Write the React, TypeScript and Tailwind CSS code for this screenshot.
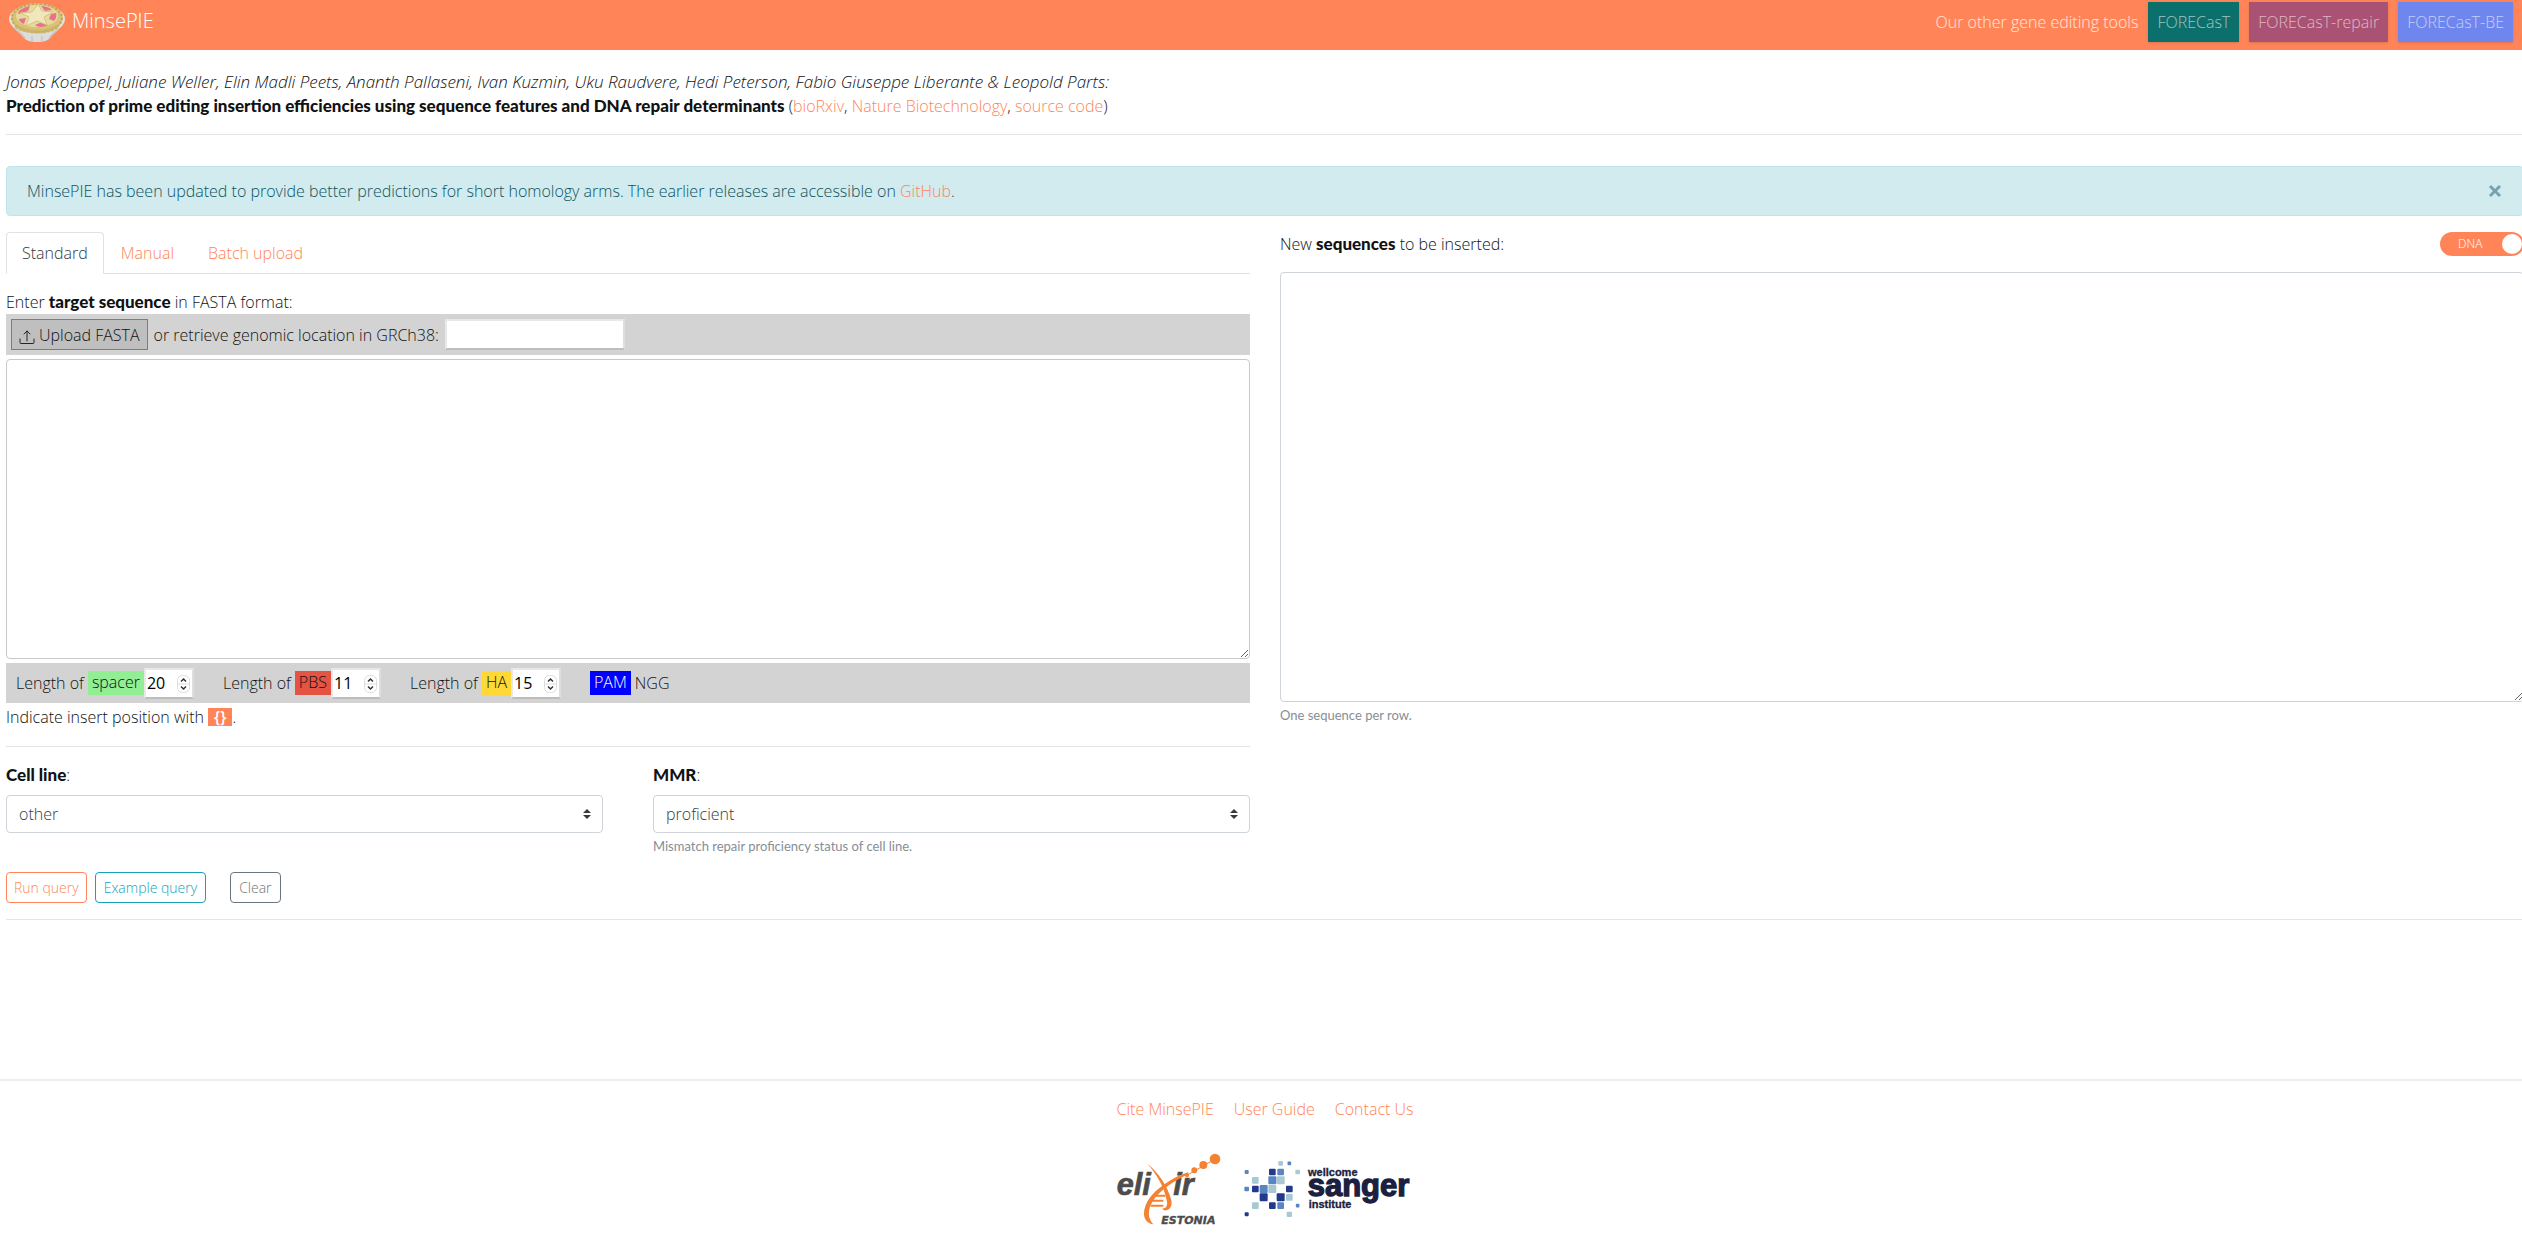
import React from 'react';

const LINK = 'text-[#ff8559] hover:underline';

function PieLogo() {
  return (
    <svg viewBox="0 0 60 42" className="h-[42px] w-[60px]" aria-hidden="true">
      <path d="M2 18C2 29 12 32 15 37c3 4 8 5 14 5s11-1 14-5c3-5 13-8 13-19z" fill="#dcdcdc" />
      <path d="M5 27c5 5 9 6 12 11M53 27c-5 5-9 6-12 11M24 36v5M34 36v5" stroke="#bdbdc0" strokeWidth="1" fill="none" />
      <ellipse cx="29" cy="19" rx="28" ry="15" fill="#e4e2dc" />
      <ellipse cx="29" cy="18" rx="26" ry="15" fill="#d8c274" />
      <ellipse cx="29" cy="18" rx="25" ry="14" fill="none" stroke="#bfa65b" strokeWidth="2" strokeDasharray="2 2" />
      <ellipse cx="29" cy="16" rx="21" ry="11" fill="#e7da9f" />
      <path d="M10 13c2-4 7-6 12-7l-2 5-9 3zM33 6c4 0 8 1 11 4l-7 1zM43 14l5-1c1 3 0 6-2 8l-5-2zM11 19l7-1-2 6c-3-1-5-3-5-5zM27 25l7-3 6 3c-3 2-10 3-13 0z" fill="#e8718c" />
      <path d="M30 4l4 7 11 1-9 5 3 8-10-4-11 5 3-9-9-4 12-1z" fill="#f1e7bd" stroke="#d6c57f" strokeWidth="1" />
      <path d="M8 26c8 7 34 8 42 0" fill="none" stroke="#cdb568" strokeWidth="4" strokeDasharray="3 1" />
    </svg>
  );
}

function ElixirLogo() {
  return (
    <svg viewBox="18 24 318 228" className="h-[76px] w-[106px]" role="img" aria-label="elixir Estonia">
      <g fill="#4d4b4c" stroke="#4d4b4c" fontFamily="Liberation Sans, sans-serif" fontWeight="700" fontStyle="italic">
        <text x="20" y="150" fontSize="92" strokeWidth="2">eli</text>
        <text x="190" y="150" fontSize="92" strokeWidth="2">ir</text>
        <text x="154" y="236" fontSize="33" strokeWidth="1" fontFamily="DejaVu Sans, sans-serif">ESTONIA</text>
      </g>
      <g fill="#f58233">
        <path d="M112 56C148 84 172 124 183 162c5 16 0 32-14 34-8 1-11-2-11-6 8 1 15-6 13-20C165 132 144 92 112 56z" />
        <path d="M236 88C196 104 150 136 130 166c-18 28-18 54 0 72-16-2-28-14-28-32 0-32 26-64 58-86 26-18 48-30 74-38z" />
        <circle cx="315" cy="42" r="16" />
        <circle cx="280" cy="60" r="12" />
        <circle cx="253" cy="76" r="9" />
        <circle cx="231" cy="91" r="6" />
      </g>
      <path d="M231 91L315 42" stroke="#f58233" strokeWidth="3" />
      <path d="M138 152h28M126 167h34M122 182h38" stroke="#f58233" strokeWidth="6" />
    </svg>
  );
}

const SQUARES: [number, number, number, string][] = [
  [134, 40, 14, '#a8c9d3'], [185, 66, 14, '#a8c9d3'], [58, 91, 20, '#a8c9d3'], [134, 91, 24, '#a8c9d3'],
  [109, 117, 24, '#a8c9d3'], [160, 142, 20, '#a8c9d3'], [58, 167, 20, '#a8c9d3'], [160, 193, 16, '#a8c9d3'],
  [160, 40, 11, '#5b85c0'], [32, 66, 12, '#5b85c0'], [134, 66, 20, '#5b85c0'], [109, 91, 24, '#5b85c0'],
  [32, 117, 14, '#5b85c0'], [83, 117, 24, '#5b85c0'], [134, 167, 20, '#5b85c0'], [185, 167, 11, '#5b85c0'],
  [109, 66, 20, '#22398c'], [58, 117, 20, '#22398c'], [160, 117, 20, '#22398c'], [83, 142, 24, '#22398c'],
  [134, 142, 24, '#22398c'], [109, 167, 20, '#22398c'], [32, 193, 12, '#22398c'],
];

function SangerLogo() {
  return (
    <svg viewBox="24 30 501 174" className="h-[58px] w-[167px]" role="img" aria-label="Wellcome Sanger Institute">
      {SQUARES.map(([x, y, s, c]) => (
        <rect key={`${x}-${y}`} x={x - s / 2} y={y - s / 2} width={s} height={s} rx="3" fill={c} />
      ))}
      <g fill="#1c1f40" stroke="#1c1f40" fontFamily="Liberation Sans, sans-serif" fontWeight="700">
        <text x="216" y="77" fontSize="33" strokeWidth="1">wellcome</text>
        <text x="215" y="138" fontSize="93" strokeWidth="4">sanger</text>
        <text x="218" y="175" fontSize="33" strokeWidth="1">institute</text>
      </g>
    </svg>
  );
}

function UploadIcon() {
  return (
    <svg viewBox="0 0 16 16" className="mt-1 size-4" fill="none" stroke="#212529" strokeWidth="1" strokeLinecap="round" strokeLinejoin="round" aria-hidden="true">
      <path d="M1 10v3.500a1 1 0 0 0 1 1h12a1 1 0 0 0 1-1V10M8 12V2M5 5l3-3 3 3" />
    </svg>
  );
}

function LengthField({ name, color, value }: { name: string; color: string; value: number }) {
  return (
    <div className="flex items-center">
      <label htmlFor={name} className="flex gap-1">
        Length of <span className={`px-1 leading-[22px] ${color}`}>{name}</span>
      </label>
      <div className="relative h-[31px] w-[50px]">
        <input
          id={name}
          type="number"
          defaultValue={value}
          className="block size-full appearance-none border-2 border-t-[#e8e8e8] border-r-[#dedede] border-b-[#bdbdbd] border-l-[#e8e8e8] bg-white pl-px font-normal text-black [-moz-appearance:textfield] [&::-webkit-inner-spin-button]:appearance-none"
        />
        <svg viewBox="0 0 13 18" className="pointer-events-none absolute top-[7px] right-1 h-[18px] w-[13px]" aria-hidden="true">
          <rect x="0.5" y="0.500" width="12" height="17" rx="5" fill="#fff" stroke="#dcdcdc" />
          <path d="M0 9h13" stroke="#dcdcdc" />
          <path d="M4 6.500l2.500-2.500L9 6.500M4 11.500L6.500 14 9 11.500" fill="none" stroke="#333" strokeWidth="1.500" />
        </svg>
      </div>
    </div>
  );
}

function SelectField({ id, label, options, hint }: { id: string; label: string; options: string[]; hint?: string }) {
  return (
    <div>
      <label htmlFor={id} className="mb-2 block">
        <b className="font-[Lato] text-[17px] leading-6 font-black">{label}</b>:
      </label>
      <div className="relative">
        <select id={id} className="block h-[38px] w-full appearance-none rounded border border-[#ced4da] bg-white px-3 text-[#343a40]">
          {options.map((o) => (
            <option key={o}>{o}</option>
          ))}
        </select>
        <svg viewBox="0 0 8 10" className="pointer-events-none absolute top-[14px] right-3 h-[10px] w-2" fill="#343a40" aria-hidden="true">
          <path d="M4 0L0 4h8zM4 10L0 6h8z" />
        </svg>
      </div>
      <small className="mt-1 block h-5 font-[Lato] text-[13px] leading-[19px] font-normal text-[#868e96]">{hint}</small>
    </div>
  );
}

const TOOLS = [
  ['FORECasT', 'bg-[#0b706c]'],
  ['FORECasT-repair', 'bg-[#a95273]'],
  ['FORECasT-BE', 'bg-[#6f86ee]'],
];

export default function App() {
  return (
    <div className="flex min-h-screen flex-col overflow-hidden bg-white font-['Open_Sans',sans-serif] text-base leading-6 font-light text-[#101214]">
      <header className="flex h-[50px] items-start justify-between bg-[#ff8559] pr-[9px] pl-2">
        <a href="#home" className="flex gap-1 text-xl leading-[42px] text-white">
          <PieLogo />
          MinsePIE
        </a>
        <nav className="flex items-center gap-[10px] pt-[2px]">
          <span className="text-white/80">Our other gene editing tools</span>
          {TOOLS.map(([name, bg]) => (
            <a key={name} href={`#${name}`} className={`px-[9px] py-2 text-white/60 shadow ${bg}`}>
              {name}
            </a>
          ))}
        </nav>
      </header>

      <main className="-mr-[2px] pl-[6px]">
        <div className="border-b border-black/10 pt-5 pb-4">
          <p className="text-[17px] leading-6 italic">
            Jonas Koeppel, Juliane Weller, Elin Madli Peets, Ananth Pallaseni, Ivan Kuzmin, Uku Raudvere, Hedi Peterson,
            Fabio Giuseppe Liberante &amp; Leopold Parts:
          </p>
          <p>
            <b className="font-[Lato] text-[17px] leading-6 font-black">
              Prediction of prime editing insertion efficiencies using sequence features and DNA repair determinants
            </b>{' '}
            (<a href="#biorxiv" className={LINK}>bioRxiv</a>, <a href="#nature" className={LINK}>Nature Biotechnology</a>,{' '}
            <a href="#source" className={LINK}>source code</a>)
          </p>
        </div>

        <div className="mt-[31px] flex items-center justify-between rounded border border-[#bee5eb] bg-[#d1ebef] py-3 pr-[21px] pl-5 text-[#0c5460]">
          <p>
            MinsePIE has been updated to provide better predictions for short homology arms. The earlier releases are
            accessible on <a href="#github" className={LINK}>GitHub</a>.
          </p>
          <button type="button" aria-label="Close" className="text-[#75a3ae]">
            <svg viewBox="0 0 14 14" className="size-[14px]" stroke="currentColor" strokeWidth="3" aria-hidden="true">
              <path d="M2 2l10 10M12 2L2 12" />
            </svg>
          </button>
        </div>

        <div className="mt-4 grid grid-cols-2 gap-[30px]">
          <section>
            <div role="tablist" className="flex h-[42px] border-b border-[#dee2e6]">
              <button type="button" role="tab" aria-selected="true" className="-mb-px rounded-t border border-[#dee2e6] border-b-white bg-white px-[15px] text-[#343a40]">
                Standard
              </button>
              <button type="button" role="tab" aria-selected="false" className="px-[17px] text-[#ff8559]">
                Manual
              </button>
              <button type="button" role="tab" aria-selected="false" className="px-[17px] text-[#ff8559]">
                Batch upload
              </button>
            </div>

            <label htmlFor="fasta" className="mt-4 block">
              Enter <b className="font-[Lato] text-[17px] leading-6 font-black">target sequence</b> in FASTA format:
            </label>
            <div className="flex h-[41px] items-center gap-[6px] bg-[#d3d3d3] pl-[5px]">
              <button type="button" className="flex h-[31px] items-center gap-1 border border-[#7d7d7d] bg-[#bfbfbf] px-[7px]">
                <UploadIcon />
                Upload FASTA
              </button>
              <label htmlFor="location">or retrieve genomic location in GRCh38:</label>
              <input
                id="location"
                type="text"
                className="h-[31px] w-[180px] border-2 border-t-[#e8e8e8] border-r-[#dedede] border-b-[#bdbdbd] border-l-[#e8e8e8] bg-white px-px"
              />
            </div>
            <textarea id="fasta" className="mt-1 block h-[300px] w-full rounded border border-[#c8c8c8] bg-white" />
            <div className="mt-1 flex h-10 items-center gap-[29px] bg-[#d3d3d3] pl-[10px]">
              <LengthField name="spacer" color="bg-[#92ee92]" value={20} />
              <LengthField name="PBS" color="bg-[#e55343]" value={11} />
              <LengthField name="HA" color="bg-[#ffd835]" value={15} />
              <div className="flex gap-1">
                <span className="bg-[#0000ff] px-1 leading-[22px] text-white">PAM</span> NGG
              </div>
            </div>
            <p className="mt-[2px]">
              Indicate insert position with <span className="inline-block bg-[#ff8559] px-[6px] text-base leading-[18px] font-semibold text-white">{'{}'}</span>.
            </p>
            <hr className="mt-[17px] mb-4 border-black/10" />
            <div className="grid grid-cols-2 gap-[50px]">
              <SelectField id="cell" label="Cell line" options={['other', 'HEK293T', 'HAP1']} />
              <SelectField id="mmr" label="MMR" options={['proficient', 'deficient']} hint="Mismatch repair proficiency status of cell line." />
            </div>
            <div className="mt-[15px] flex text-sm leading-[21px]">
              <button type="button" className="h-[31px] rounded border border-[#ff8559] px-[7px] text-[#ff8559]">
                Run query
              </button>
              <button type="button" className="ml-2 h-[31px] rounded border border-[#17a2b8] px-2 text-[#17a2b8]">
                Example query
              </button>
              <button type="button" className="ml-6 h-[31px] rounded border border-[#6c757d] px-2 text-[#6c757d]">
                Clear
              </button>
            </div>
          </section>

          <section>
            <div className="flex justify-between">
              <label htmlFor="inserts">
                New <b className="font-[Lato] text-[17px] leading-6 font-black">sequences</b> to be inserted:
              </label>
              <label className="relative flex h-6 w-[84px] items-center rounded-full bg-[#ff8559] pl-[18px] text-xs text-white">
                <input type="checkbox" defaultChecked role="switch" className="absolute top-[2px] right-[2px] size-5 appearance-none rounded-full bg-white" />
                DNA
              </label>
            </div>
            <textarea id="inserts" className="mt-4 block h-[430px] w-full rounded border border-[#ced4da] bg-white" />
            <small className="mt-1 block font-[Lato] text-[13px] leading-[19px] font-normal text-[#868e96]">One sequence per row.</small>
          </section>
        </div>
        <hr className="mt-4 border-black/10" />
      </main>

      <footer className="mt-auto h-[160px] border-t-2 border-[#eeeeee] pt-4">
        <nav className="flex justify-center gap-5 pl-2">
          <a href="#cite" className={LINK}>Cite MinsePIE</a>
          <a href="#guide" className={LINK}>User Guide</a>
          <a href="#contact" className={LINK}>Contact Us</a>
        </nav>
        <div className="mt-8 flex items-start justify-center gap-[22px] pl-[5px]">
          <a href="#elixir"><ElixirLogo /></a>
          <a href="#sanger" className="pt-[7px]"><SangerLogo /></a>
        </div>
      </footer>
    </div>
  );
}
